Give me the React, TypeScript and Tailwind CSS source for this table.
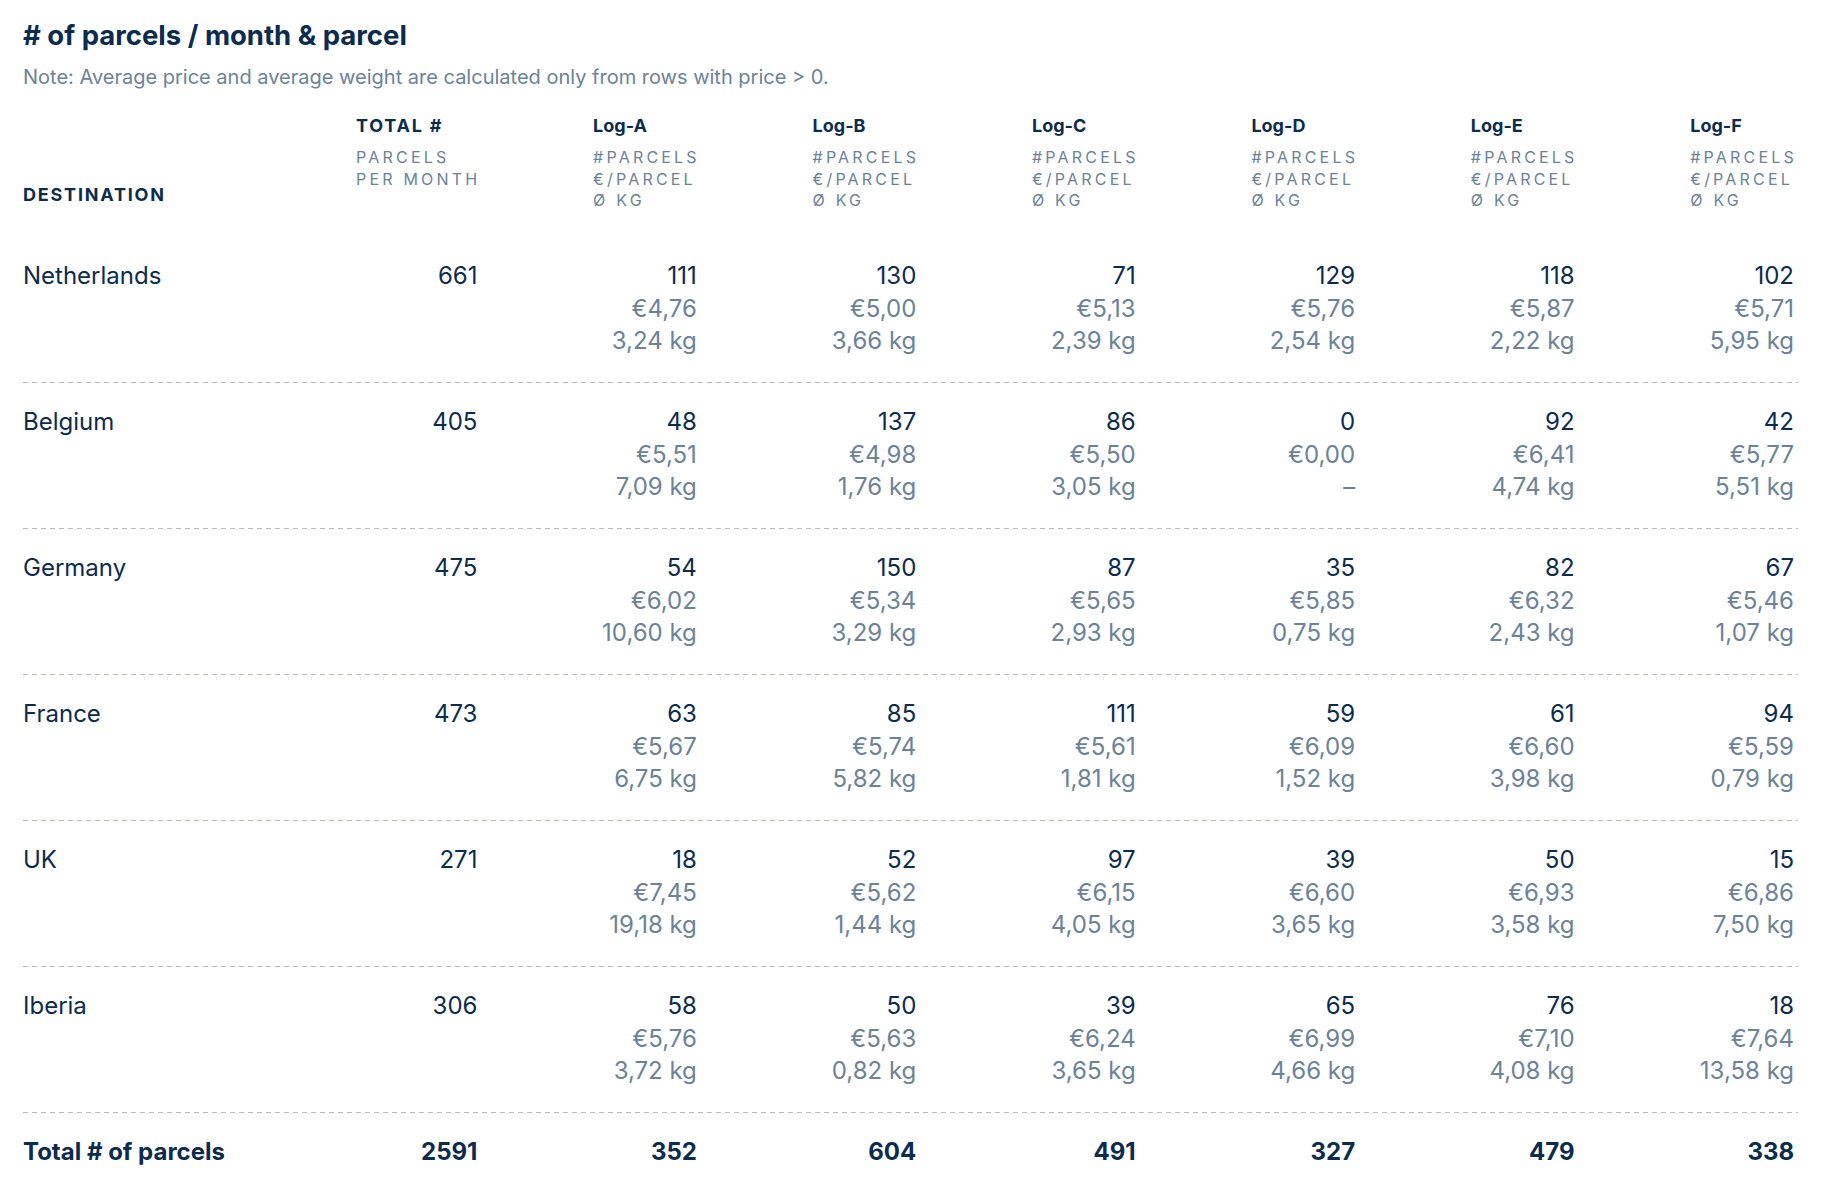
import React from 'react'

type Cell = [string, string, string]
type Row = { dest: string; total: string; logs: Cell[] }

const carriers = ['Log-A', 'Log-B', 'Log-C', 'Log-D', 'Log-E', 'Log-F']

const rows: Row[] = [
  {
    dest: 'Netherlands',
    total: '661',
    logs: [
      ['111', '€4,76', '3,24 kg'],
      ['130', '€5,00', '3,66 kg'],
      ['71', '€5,13', '2,39 kg'],
      ['129', '€5,76', '2,54 kg'],
      ['118', '€5,87', '2,22 kg'],
      ['102', '€5,71', '5,95 kg'],
    ],
  },
  {
    dest: 'Belgium',
    total: '405',
    logs: [
      ['48', '€5,51', '7,09 kg'],
      ['137', '€4,98', '1,76 kg'],
      ['86', '€5,50', '3,05 kg'],
      ['0', '€0,00', '–'],
      ['92', '€6,41', '4,74 kg'],
      ['42', '€5,77', '5,51 kg'],
    ],
  },
  {
    dest: 'Germany',
    total: '475',
    logs: [
      ['54', '€6,02', '10,60 kg'],
      ['150', '€5,34', '3,29 kg'],
      ['87', '€5,65', '2,93 kg'],
      ['35', '€5,85', '0,75 kg'],
      ['82', '€6,32', '2,43 kg'],
      ['67', '€5,46', '1,07 kg'],
    ],
  },
  {
    dest: 'France',
    total: '473',
    logs: [
      ['63', '€5,67', '6,75 kg'],
      ['85', '€5,74', '5,82 kg'],
      ['111', '€5,61', '1,81 kg'],
      ['59', '€6,09', '1,52 kg'],
      ['61', '€6,60', '3,98 kg'],
      ['94', '€5,59', '0,79 kg'],
    ],
  },
  {
    dest: 'UK',
    total: '271',
    logs: [
      ['18', '€7,45', '19,18 kg'],
      ['52', '€5,62', '1,44 kg'],
      ['97', '€6,15', '4,05 kg'],
      ['39', '€6,60', '3,65 kg'],
      ['50', '€6,93', '3,58 kg'],
      ['15', '€6,86', '7,50 kg'],
    ],
  },
  {
    dest: 'Iberia',
    total: '306',
    logs: [
      ['58', '€5,76', '3,72 kg'],
      ['50', '€5,63', '0,82 kg'],
      ['39', '€6,24', '3,65 kg'],
      ['65', '€6,99', '4,66 kg'],
      ['76', '€7,10', '4,08 kg'],
      ['18', '€7,64', '13,58 kg'],
    ],
  },
]

const totals = ['2591', '352', '604', '491', '327', '479', '338']

const grid = 'grid grid-cols-[239px_repeat(7,minmax(0,1fr))]'

function Divider() {
  return (
    <div className="h-px bg-[repeating-linear-gradient(90deg,#c2b9b5_0_5px,transparent_5px_9px)]" />
  )
}

function HeaderCell({ title, lines, tracked }: { title: string; lines: string[]; tracked?: boolean }) {
  return (
    <div className="pr-[4px] text-right">
      <div className="inline-block text-left">
        <div
          className={`text-[18px] font-bold leading-[24px] text-[#0b2b4f] ${tracked ? 'tracking-[0.1em]' : ''}`}
        >
          {title}
        </div>
        <div className="mt-[9px] mr-[-3px] text-[16px] uppercase leading-[21.5px] tracking-[0.2em] text-[#6b8299]">
          {lines.map((l) => (
            <div key={l}>{l}</div>
          ))}
        </div>
      </div>
    </div>
  )
}

export default function App() {
  return (
    <div className="min-h-screen bg-white pl-[23px] pt-[19px] font-['Inter','Noto_Sans',sans-serif] text-[#0b2b4f]">
      {/* Title */}
      <h1 className="text-[27.5px] font-bold leading-[32px]">
        # of parcels / month &amp; parcel
      </h1>
      <p className="mt-[12px] text-[20px] leading-[28px] text-[#6b8299]">
        Note: Average price and average weight are calculated only from rows with price &gt; 0.
      </p>

      <div className="mt-[23px] w-[1775px]">
        {/* Header */}
        <div className={`${grid} pb-[25px]`}>
          <div className="self-end pb-[5.5px] text-[18px] font-bold leading-[24px] tracking-[0.1em]">
            DESTINATION
          </div>
          <HeaderCell title="TOTAL #" lines={['Parcels', 'per month']} tracked />
          {carriers.map((c) => (
            <HeaderCell key={c} title={c} lines={['#Parcels', '€/Parcel', 'Ø kg']} />
          ))}
        </div>

        {/* Rows */}
        {rows.map((r) => (
          <div key={r.dest}>
            <div className={`${grid} pt-[23px] pb-[24.5px] text-[24px] leading-[32.5px]`}>
              <div>{r.dest}</div>
              <div className="pr-[4px] text-right">{r.total}</div>
              {r.logs.map((cell, i) => (
                <div key={i} className="pr-[4px] text-right">
                  <div>{cell[0]}</div>
                  <div className="text-[#6b8299]">{cell[1]}</div>
                  <div className="text-[#6b8299]">{cell[2]}</div>
                </div>
              ))}
            </div>
            <Divider />
          </div>
        ))}

        {/* Totals */}
        <div className={`${grid} pt-[23px] pb-[24px] text-[24px] font-bold leading-[32.5px]`}>
          <div>Total # of parcels</div>
          {totals.map((t, i) => (
            <div key={i} className="pr-[4px] text-right">
              {t}
            </div>
          ))}
        </div>
      </div>
    </div>
  )
}
